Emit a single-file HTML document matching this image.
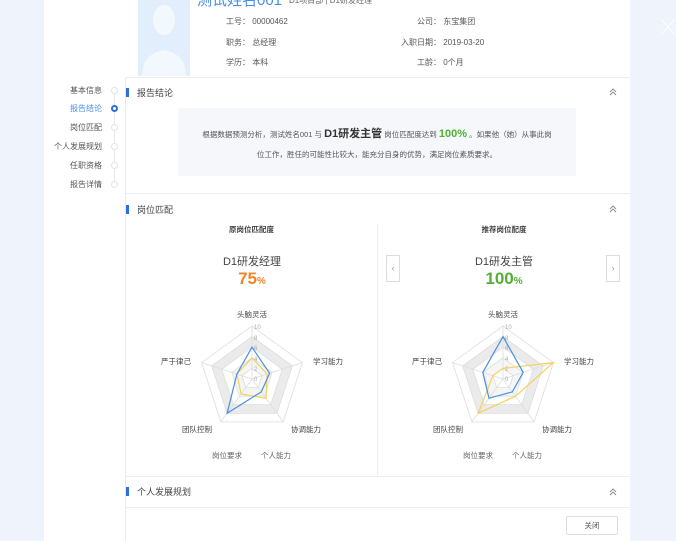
<!DOCTYPE html>
<html><head><meta charset="utf-8"><style>
*{margin:0;padding:0;box-sizing:border-box}
body{width:676px;height:541px;overflow:hidden;background:#eef3fc;font-family:"Liberation Sans","Noto Sans CJK SC",sans-serif;color:#333;position:relative}
.abs{position:absolute;white-space:nowrap}
.page{position:absolute;left:44px;top:0;width:586px;height:541px;background:#fff}
.sep{position:absolute;left:125px;top:78px;width:1px;height:463px;background:#eaeaea}
.s{font-size:8px;color:#555}
.nav{font-size:8px;color:#555;right:574px;text-align:right}
.dot{position:absolute;left:111px;width:7px;height:7px;border:1px solid #e4e4e4;border-radius:50%;background:#fff}
.bar{position:absolute;left:126px;width:3px;height:9px;background:#2d6fe0}
.st{font-size:9px;color:#444}
.hl{position:absolute;left:126px;width:504px;height:1px;background:#eee}
</style></head><body>
<div class="page"></div>
<svg class="abs" style="left:660px;top:18px" width="16" height="18"><path d="M1 1L15 17M15 1L1 17" stroke="#fff" stroke-width="1"/></svg>
<div class="sep"></div>
<!-- header -->
<div class="abs" style="left:138px;top:0;width:52px;height:76px;background:#e2eefb"></div>
<svg class="abs" style="left:138px;top:0" width="52" height="76"><ellipse cx="26" cy="20" rx="11" ry="15" fill="#f3f8fe"/><path d="M4 76 Q4 54 26 50 Q48 54 48 76Z" fill="#f3f8fe"/></svg>
<div class="abs" style="left:197px;top:-11px;font-size:15px;color:#4a8fe6">测试姓名001</div>
<div class="abs s" style="left:289px;top:-5px;color:#666">D1项目部 | D1研发经理</div>
<div class="hl" style="top:77px"></div>
<div class="abs s" style="left:226px;top:16px">工号： 00000462</div>
<div class="abs s" style="left:417px;top:16px">公司： 东宝集团</div>
<div class="abs s" style="left:226px;top:37px">职务： 总经理</div>
<div class="abs s" style="left:401px;top:37px">入职日期： 2019-03-20</div>
<div class="abs s" style="left:226px;top:57px">学历： 本科</div>
<div class="abs s" style="left:417px;top:57px">工龄： 0个月</div>
<!-- nav -->
<div class="abs" style="left:114px;top:90px;width:1px;height:95px;background:#e8e8e8"></div>
<div class="abs nav" style="top:85px">基本信息</div><div class="dot" style="top:87px"></div>
<div class="abs nav" style="top:103px;color:#4a8fe6">报告结论</div><div class="dot" style="top:105px;border:2px solid #2d6fe0"></div>
<div class="abs nav" style="top:122px">岗位匹配</div><div class="dot" style="top:124px"></div>
<div class="abs nav" style="top:141px">个人发展规划</div><div class="dot" style="top:143px"></div>
<div class="abs nav" style="top:160px">任职资格</div><div class="dot" style="top:162px"></div>
<div class="abs nav" style="top:179px">报告详情</div><div class="dot" style="top:181px"></div>
<!-- conclusion -->
<div class="bar" style="top:88px"></div>
<div class="abs st" style="left:137px;top:86px">报告结论</div>
<svg class="abs" style="left:609px;top:88px" width="8" height="8"><path d="M1 4L4 1L7 4M1 7L4 4L7 7" fill="none" stroke="#888" stroke-width="0.9"/></svg>
<div class="abs" style="left:178px;top:108px;width:398px;height:68px;background:#f5f7fb"></div>
<div class="abs" style="left:178px;top:124px;width:398px;text-align:center;font-size:7.5px;color:#555;line-height:20px;white-space:normal">根据数据预测分析，测试姓名001 与 <b style="font-size:11px;color:#333">D1研发主管</b> 岗位匹配度达到 <b style="font-size:11px;color:#52b034">100%</b> 。如果他（她）从事此岗<br>位工作，胜任的可能性比较大，能充分自身的优势，满足岗位素质要求。</div>
<div class="hl" style="top:193px"></div>
<!-- match -->
<div class="bar" style="top:205px"></div>
<div class="abs st" style="left:137px;top:203px">岗位匹配</div>
<svg class="abs" style="left:609px;top:205px" width="8" height="8"><path d="M1 4L4 1L7 4M1 7L4 4L7 7" fill="none" stroke="#888" stroke-width="0.9"/></svg>
<div class="abs" style="left:377px;top:224px;width:1px;height:252px;background:#eee"></div>
<div class="abs" style="left:126px;top:224px;width:251px;text-align:center;font-size:7.5px;font-weight:bold;color:#444">原岗位匹配度</div>
<div class="abs" style="left:378px;top:224px;width:252px;text-align:center;font-size:7.5px;font-weight:bold;color:#444">推荐岗位配度</div>
<div class="abs" style="left:126px;top:253px;width:252px;text-align:center;font-size:11px;color:#444">D1研发经理</div>
<div class="abs" style="left:378px;top:253px;width:252px;text-align:center;font-size:11px;color:#444">D1研发主管</div>
<div class="abs" style="left:126px;top:269px;width:252px;text-align:center;font-size:17px;font-weight:bold;color:#f0842a">75<span style="font-size:10px">%</span></div>
<div class="abs" style="left:378px;top:269px;width:252px;text-align:center;font-size:17px;font-weight:bold;color:#52b034">100<span style="font-size:10px">%</span></div>
<div class="abs" style="left:386px;top:255px;width:14px;height:27px;border:1px solid #ddd;font-size:9px;color:#999;text-align:center;line-height:25px">‹</div>
<div class="abs" style="left:606px;top:255px;width:14px;height:27px;border:1px solid #ddd;font-size:9px;color:#999;text-align:center;line-height:25px">›</div>
<svg class="abs" style="left:0;top:0" width="676" height="541">
<defs><g id="rings">
<polygon points="0,-53 50.4,-16.4 31.2,42.9 -31.2,42.9 -50.4,-16.4" fill="#fff" stroke="#ddd" stroke-width="0.8"/>
<polygon points="0,-42.4 40.3,-13.1 24.9,34.3 -24.9,34.3 -40.3,-13.1" fill="#ebebeb" stroke="#ddd" stroke-width="0.8"/>
<polygon points="0,-31.8 30.2,-9.8 18.7,25.7 -18.7,25.7 -30.2,-9.8" fill="#fff" stroke="#ddd" stroke-width="0.8"/>
<polygon points="0,-21.2 20.2,-6.6 12.5,17.2 -12.5,17.2 -20.2,-6.6" fill="#f5f5f5" stroke="#ddd" stroke-width="0.8"/>
<polygon points="0,-10.6 10.1,-3.3 6.2,8.6 -6.2,8.6 -10.1,-3.3" fill="#fff" stroke="#ddd" stroke-width="0.8"/>
<path d="M0 0L0 -53M0 0L50.4 -16.4M0 0L31.2 42.9M0 0L-31.2 42.9M0 0L-50.4 -16.4" stroke="#ddd" stroke-width="0.8"/>
<g font-size="6" fill="#aaa" font-family="Liberation Sans"><text x="2" y="-50">10</text><text x="2" y="-39">8</text><text x="2" y="-29">6</text><text x="2" y="-18">4</text><text x="2" y="-8">2</text><text x="2" y="2">0</text></g>
</g></defs>
<g transform="translate(252,379)"><use href="#rings"/>
<polygon points="0,-21.2 15.1,-4.9 14,19.3 -10.9,15 -15.1,-4.9" fill="none" stroke="#f2d35c" stroke-width="1.2"/>
<polygon points="0,-31.8 17.6,-5.7 9.3,12.9 -24.9,34.3 -15.1,-4.9" fill="none" stroke="#4a90e2" stroke-width="1.2"/></g>
<g transform="translate(503,379)"><use href="#rings"/>
<polygon points="0,-10.6 50.4,-16.4 12.5,17.2 -24.9,34.3 -10.1,-3.3" fill="none" stroke="#f2d35c" stroke-width="1.2"/>
<polygon points="0,-42.4 20.2,-6.6 9.3,12.9 -14,19.3 -20.2,-6.6" fill="none" stroke="#4a90e2" stroke-width="1.2"/></g>
<g font-size="7.5" fill="#444" font-family="Liberation Sans,Noto Sans CJK SC,sans-serif">
<text x="252" y="317" text-anchor="middle">头脑灵活</text><text x="313" y="364">学习能力</text><text x="191" y="364" text-anchor="end">严于律己</text><text x="197" y="432" text-anchor="middle">团队控制</text><text x="306" y="432" text-anchor="middle">协调能力</text>
<text x="227" y="458" text-anchor="middle" fill="#666">岗位要求</text><text x="276" y="458" text-anchor="middle" fill="#666">个人能力</text>
<text x="503" y="317" text-anchor="middle">头脑灵活</text><text x="564" y="364">学习能力</text><text x="442" y="364" text-anchor="end">严于律己</text><text x="448" y="432" text-anchor="middle">团队控制</text><text x="557" y="432" text-anchor="middle">协调能力</text>
<text x="478" y="458" text-anchor="middle" fill="#666">岗位要求</text><text x="527" y="458" text-anchor="middle" fill="#666">个人能力</text>
</g></svg>
<div class="hl" style="top:476px"></div>
<div class="bar" style="top:487px"></div>
<div class="abs st" style="left:137px;top:485px">个人发展规划</div>
<svg class="abs" style="left:609px;top:488px" width="8" height="8"><path d="M1 4L4 1L7 4M1 7L4 4L7 7" fill="none" stroke="#888" stroke-width="0.9"/></svg>
<div class="hl" style="top:507px"></div>
<div class="abs" style="left:566px;top:516px;width:52px;height:19px;border:1px solid #ddd;border-radius:2px;font-size:7.5px;color:#555;text-align:center;line-height:17px">关闭</div>
</body></html>
